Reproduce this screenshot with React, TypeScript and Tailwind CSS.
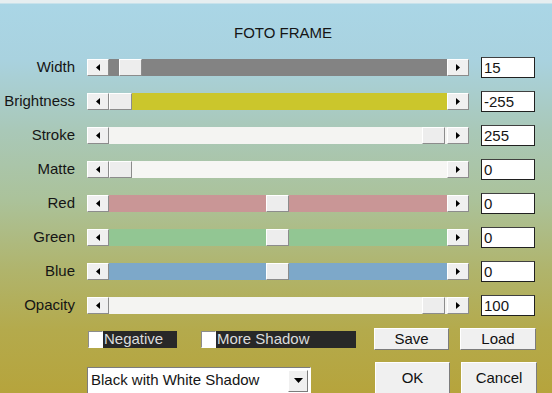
import React from 'react';

type Row = {
  label: string;
  track: string;
  thumb: number | null;
  value: string;
};

const rows: Row[] = [
  { label: 'Width', track: 'bg-[#838383]', thumb: 10, value: '15' },
  { label: 'Brightness', track: 'bg-[#cbc62c]', thumb: 0, value: '-255' },
  { label: 'Stroke', track: 'bg-[#f4f4f2]', thumb: 313, value: '255' },
  { label: 'Matte', track: 'bg-[#f6f6f4]', thumb: 0, value: '0' },
  { label: 'Red', track: 'bg-[#c99696]', thumb: 157, value: '0' },
  { label: 'Green', track: 'bg-[#92c693]', thumb: 157, value: '0' },
  { label: 'Blue', track: 'bg-[#7da8c9]', thumb: 157, value: '0' },
  { label: 'Opacity', track: 'bg-[#f4f4f2]', thumb: 313, value: '100' },
];

const font = { fontFamily: '"Liberation Sans", Arial, sans-serif' };

function ArrowButton({ dir }: { dir: 'left' | 'right' }) {
  return (
    <div className="flex h-[17px] w-[22px] shrink-0 items-center justify-center border border-t-white border-l-white border-b-[#8c8c8c] border-r-[#8c8c8c] bg-[#f0f0f0]">
      <svg width="4" height="7" viewBox="0 0 4 7">
        {dir === 'left' ? <path d="M4 0 L0 3.5 L4 7 Z" fill="#000" /> : <path d="M0 0 L4 3.5 L0 7 Z" fill="#000" />}
      </svg>
    </div>
  );
}

function Scrollbar({ track, thumb }: { track: string; thumb: number | null }) {
  return (
    <div className="flex h-[17px] w-[382px] items-center">
      <ArrowButton dir="left" />
      <div className={`relative h-[17px] flex-1 ${track}`}>
        {thumb !== null && (
          <div
            className="absolute top-0 h-[17px] w-[23px] border border-t-white border-l-white border-b-[#8c8c8c] border-r-[#8c8c8c] bg-[#ededed]"
            style={{ left: thumb }}
          />
        )}
      </div>
      <ArrowButton dir="right" />
    </div>
  );
}

function Checkbox({ label, width }: { label: string; width: string }) {
  return (
    <div className="flex h-[18px] items-center">
      <div className="h-[17px] w-[15px] border border-t-[#8c8c8c] border-l-[#8c8c8c] border-b-white border-r-white bg-white" />
      <div className={`flex h-[17px] items-center bg-[#282828] pl-[1px] text-[15px] text-[#dcdcdc] ${width}`}>{label}</div>
    </div>
  );
}

function Button({ label, w, h }: { label: string; w: string; h: string }) {
  return (
    <div
      className={`flex items-center justify-center border border-t-white border-l-white border-b-[#7c7c7c] border-r-[#7c7c7c] bg-[#f0f0f0] text-[15px] text-[#111] ${w} ${h}`}
    >
      {label}
    </div>
  );
}

export default function App() {
  return (
    <div
      className="relative h-[393px] w-[552px] overflow-hidden bg-[linear-gradient(180deg,#e6eef0_0px,#e6eef0_3px,#aad6e6_4px,#a9d2df_60px,#a9c8b8_130px,#abc29a_200px,#b0b46c_270px,#b4aa4c_330px,#b6a43c_393px)] text-[#151515]"
      style={font}
    >
      {/* title */}
      <div className="pt-[24px] text-center text-[15px] leading-[18px]">
        <span className="pl-[14px]">FOTO FRAME</span>
      </div>

      {/* sliders */}
      <div className="mt-[8px] flex flex-col">
        {rows.map((r) => (
          <div key={r.label} className="flex h-[34px] items-center">
            <div className="w-[75px] text-right text-[15px] leading-[18px]">{r.label}</div>
            <div className="ml-[12px]">
              <Scrollbar track={r.track} thumb={r.thumb} />
            </div>
            <div className="ml-[12px] flex h-[21px] w-[54px] items-center border border-[#202020] border-t-[#404040] bg-white pl-[2px] text-[15px] leading-none">
              {r.value}
            </div>
          </div>
        ))}
      </div>

      {/* options + buttons */}
      <div className="flex h-[34px] items-center">
        <div className="ml-[88px] flex items-center gap-[24px]">
          <Checkbox label="Negative" width="w-[74px]" />
          <Checkbox label="More Shadow" width="w-[140px]" />
        </div>
        <div className="ml-[18px] flex gap-[11px]">
          <Button label="Save" w="w-[75px]" h="h-[22px]" />
          <Button label="Load" w="w-[76px]" h="h-[22px]" />
        </div>
      </div>

      <div className="mt-[6px] flex items-start">
        <div className="ml-[87px] mt-[5px] flex h-[27px] w-[224px] items-center justify-between border border-t-[#7c7c7c] border-l-[#7c7c7c] border-b-white border-r-white bg-white pl-[3px] pr-[2px] text-[15px]">
          <span>Black with White Shadow</span>
          <div className="flex h-[22px] w-[20px] items-center justify-center border border-t-white border-l-white border-b-[#7c7c7c] border-r-[#7c7c7c] bg-[#f0f0f0]">
            <svg width="9" height="5" viewBox="0 0 9 5">
              <path d="M0 0 L9 0 L4.5 5 Z" fill="#000" />
            </svg>
          </div>
        </div>
        <div className="ml-[64px] flex gap-[11px]">
          <Button label="OK" w="w-[75px]" h="h-[32px]" />
          <Button label="Cancel" w="w-[76px]" h="h-[32px]" />
        </div>
      </div>
    </div>
  );
}
